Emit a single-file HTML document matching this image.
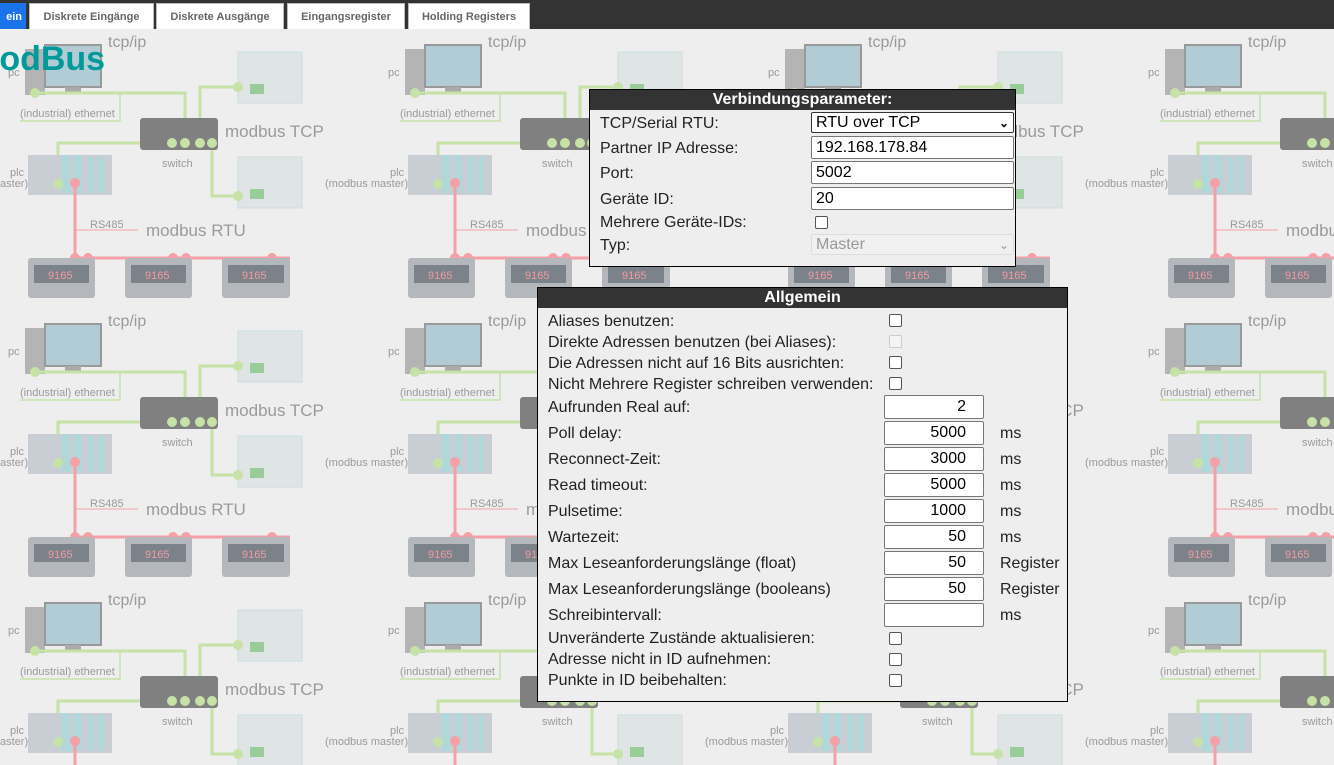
<!DOCTYPE html>
<html><head><meta charset="utf-8">
<style>
*{box-sizing:border-box;margin:0;padding:0}
body{width:1334px;height:765px;overflow:hidden;background:#eee;font-family:"Liberation Sans",Arial,sans-serif;position:relative}
#bg{position:absolute;left:0;top:0}
.top{position:absolute;left:0;top:0;width:1334px;height:29px;background:#333}
.tab{position:absolute;top:3px;height:26px;background:#fff;border:1px solid #bbb;border-bottom:none;font:bold 11px "Liberation Sans",Arial,sans-serif;color:#666;text-align:center;line-height:26px}
.tab.act{background:#1a73e8;color:#fff;border-color:#1a73e8}
h1{position:absolute;left:-29px;top:40px;font:bold 34px "Liberation Sans",Arial,sans-serif;color:#009a9a}
.panel{position:absolute;background:#eee;border:1px solid #000}
.hd{height:20px;background:#333;color:#fff;font:bold 16px "Liberation Sans",Arial,sans-serif;text-align:center;line-height:20px}
.l{position:absolute;font-size:16px;color:#222;white-space:nowrap;line-height:18px;margin-top:2px}
.in{position:absolute;background:#fff;border:1px solid #777;border-radius:2px;font-size:16px;color:#000;line-height:22px;padding:0 4px;white-space:nowrap}
.r{text-align:right;padding-right:17px}
.cb{position:absolute;width:13px;height:13px;border:1px solid #555;border-radius:2px;background:#fff}
.cb.d{border-color:#ccc;background:#f4f4f4}
</style></head><body>
<svg id="bg" width="1334" height="765">
<defs>
<pattern id="t" patternUnits="userSpaceOnUse" x="0" y="29" width="380" height="279">
<rect width="380" height="279" fill="#eee"/>
<rect x="25" y="20" width="20" height="46" fill="#b4b4b4"/>
<rect x="45" y="16" width="56" height="42" fill="#b2ccd6" stroke="#999" stroke-width="2"/>
<rect x="65" y="58" width="16" height="6" fill="#aaa"/>
<polyline points="35,64 185,64 185,116" fill="none" stroke="#c6e2a6" stroke-width="3"/>
<polyline points="120,64 120,92 20,92" fill="none" stroke="#c6e2a6" stroke-width="1.5"/>
<polyline points="200,116 200,58 238,58" fill="none" stroke="#c6e2a6" stroke-width="3"/>
<polyline points="212,116 212,167 238,167" fill="none" stroke="#c6e2a6" stroke-width="3"/>
<polyline points="172,114 58,114 58,155" fill="none" stroke="#c6e2a6" stroke-width="3"/>
<rect x="140" y="89" width="78" height="32" fill="#808080" rx="3"/>
<rect x="238" y="23" width="64" height="51" fill="#dfe5e5" stroke="#cdd" />
<rect x="250" y="55" width="14" height="10" fill="#9c9"/>
<rect x="238" y="128" width="64" height="51" fill="#dfe5e5" stroke="#cdd"/>
<rect x="250" y="160" width="14" height="10" fill="#9c9"/>
<rect x="28" y="126" width="84" height="40" fill="#c8ced4"/>
<rect x="62" y="126" width="8" height="38" fill="#b0d8da"/><rect x="74" y="126" width="8" height="38" fill="#b0d8da"/><rect x="88" y="128" width="6" height="36" fill="#b0d8da"/><rect x="98" y="128" width="6" height="36" fill="#b0d8da"/>
<polyline points="75,154 75,229 290,229" fill="none" stroke="#f4a0a6" stroke-width="3"/>
<line x1="75" y1="201" x2="138" y2="201" stroke="#f4a0a6" stroke-width="1"/>
<g fill="#c6e2a6"><circle cx="35" cy="64" r="5"/><circle cx="58" cy="155" r="5"/><circle cx="172" cy="114" r="5"/><circle cx="185" cy="114" r="5"/><circle cx="200" cy="114" r="5"/><circle cx="212" cy="114" r="5"/><circle cx="238" cy="58" r="5"/><circle cx="238" cy="167" r="5"/></g>
<g fill="#f4a0a6"><circle cx="75" cy="154" r="5"/><circle cx="75" cy="229" r="5"/><circle cx="88" cy="229" r="5"/><circle cx="173" cy="229" r="5"/><circle cx="186" cy="229" r="5"/><circle cx="272" cy="229" r="5"/></g>
<g fill="#b4b8bd"><rect x="28" y="229" width="67" height="40" rx="3"/><rect x="125" y="229" width="67" height="40" rx="3"/><rect x="222" y="229" width="68" height="40" rx="3"/></g>
<g fill="#7c828a"><rect x="34" y="236" width="55" height="18"/><rect x="131" y="236" width="55" height="18"/><rect x="228" y="236" width="56" height="18"/></g>
<g font-family="Liberation Sans,Arial,sans-serif" fill="#f09aa0" font-size="11"><text x="48" y="250">9165</text><text x="145" y="250">9165</text><text x="242" y="250">9165</text></g>
<g font-family="Liberation Sans,Arial,sans-serif" fill="#9a9a9a">
<text x="108" y="18" font-size="16">tcp/ip</text>
<text x="8" y="47" font-size="11">pc</text>
<text x="20" y="88" font-size="11">(industrial) ethernet</text>
<text x="225" y="108" font-size="17">modbus TCP</text>
<text x="162" y="138" font-size="11">switch</text>
<text x="10" y="147" font-size="11">plc</text>
<text x="325" y="158" font-size="11">(modbus master)</text>
<text x="-55" y="158" font-size="11">(modbus master)</text>
<text x="90" y="199" font-size="11">RS485</text>
<text x="146" y="207" font-size="17">modbus RTU</text>
</g>
</pattern>
</defs>
<rect x="0" y="29" width="1334" height="736" fill="url(#t)"/>
</svg>
<div class="top"></div>
<div class="tab act" style="left:-2px;width:28px;text-align:right;padding-right:3px">ein</div>
<div class="tab" style="left:29px;width:125px">Diskrete Eingänge</div>
<div class="tab" style="left:156px;width:128px">Diskrete Ausgänge</div>
<div class="tab" style="left:287px;width:118px">Eingangsregister</div>
<div class="tab" style="left:408px;width:122px">Holding Registers</div>
<h1>ModBus</h1>

<div class="panel" style="left:589px;top:89px;width:427px;height:178px">
<div class="hd">Verbindungsparameter:</div>
</div>
<div class="l" style="left:600px;top:113px">TCP/Serial RTU:</div>
<div class="in" style="left:811px;top:112px;width:203px;height:21px;border-color:#333;line-height:20px">RTU over TCP<span style="position:absolute;right:4px;top:0;font-size:12px;font-weight:bold">⌄</span></div>
<div class="l" style="left:600px;top:138px">Partner IP Adresse:</div>
<div class="in" style="left:811px;top:136px;width:203px;height:23px">192.168.178.84</div>
<div class="l" style="left:600px;top:163px">Port:</div>
<div class="in" style="left:811px;top:161px;width:203px;height:23px">5002</div>
<div class="l" style="left:600px;top:189px">Geräte ID:</div>
<div class="in" style="left:811px;top:187px;width:203px;height:23px">20</div>
<div class="l" style="left:600px;top:212px">Mehrere Geräte-IDs:</div>
<div class="cb" style="left:815px;top:216px"></div>
<div class="l" style="left:600px;top:235px">Typ:</div>
<div class="in" style="left:811px;top:234px;width:203px;height:21px;background:#f0f0f0;border-color:#ddd;color:#999;line-height:20px">Master<span style="position:absolute;right:4px;top:0;font-size:12px">⌄</span></div>

<div class="panel" style="left:537px;top:287px;width:531px;height:415px">
<div class="hd">Allgemein</div>
</div>
<div class="l" style="left:548px;top:311px">Aliases benutzen:</div><div class="cb" style="left:889px;top:314px"></div>
<div class="l" style="left:548px;top:332px">Direkte Adressen benutzen (bei Aliases):</div><div class="cb d" style="left:889px;top:335px"></div>
<div class="l" style="left:548px;top:353px">Die Adressen nicht auf 16 Bits ausrichten:</div><div class="cb" style="left:889px;top:356px"></div>
<div class="l" style="left:548px;top:374px">Nicht Mehrere Register schreiben verwenden:</div><div class="cb" style="left:889px;top:377px"></div>
<div class="l" style="left:548px;top:397px">Aufrunden Real auf:</div><div class="in r" style="left:884px;top:395px;width:100px;height:24px">2</div>
<div class="l" style="left:548px;top:423px">Poll delay:</div><div class="in r" style="left:884px;top:421px;width:100px;height:24px">5000</div><div class="l" style="left:1000px;top:423px">ms</div>
<div class="l" style="left:548px;top:449px">Reconnect-Zeit:</div><div class="in r" style="left:884px;top:447px;width:100px;height:24px">3000</div><div class="l" style="left:1000px;top:449px">ms</div>
<div class="l" style="left:548px;top:475px">Read timeout:</div><div class="in r" style="left:884px;top:473px;width:100px;height:24px">5000</div><div class="l" style="left:1000px;top:475px">ms</div>
<div class="l" style="left:548px;top:501px">Pulsetime:</div><div class="in r" style="left:884px;top:499px;width:100px;height:24px">1000</div><div class="l" style="left:1000px;top:501px">ms</div>
<div class="l" style="left:548px;top:527px">Wartezeit:</div><div class="in r" style="left:884px;top:525px;width:100px;height:24px">50</div><div class="l" style="left:1000px;top:527px">ms</div>
<div class="l" style="left:548px;top:553px">Max Leseanforderungslänge (float)</div><div class="in r" style="left:884px;top:551px;width:100px;height:24px">50</div><div class="l" style="left:1000px;top:553px">Register</div>
<div class="l" style="left:548px;top:579px">Max Leseanforderungslänge (booleans)</div><div class="in r" style="left:884px;top:577px;width:100px;height:24px">50</div><div class="l" style="left:1000px;top:579px">Register</div>
<div class="l" style="left:548px;top:605px">Schreibintervall:</div><div class="in r" style="left:884px;top:603px;width:100px;height:24px"></div><div class="l" style="left:1000px;top:605px">ms</div>
<div class="l" style="left:548px;top:628px">Unveränderte Zustände aktualisieren:</div><div class="cb" style="left:889px;top:632px"></div>
<div class="l" style="left:548px;top:649px">Adresse nicht in ID aufnehmen:</div><div class="cb" style="left:889px;top:653px"></div>
<div class="l" style="left:548px;top:670px">Punkte in ID beibehalten:</div><div class="cb" style="left:889px;top:674px"></div>
</body></html>
